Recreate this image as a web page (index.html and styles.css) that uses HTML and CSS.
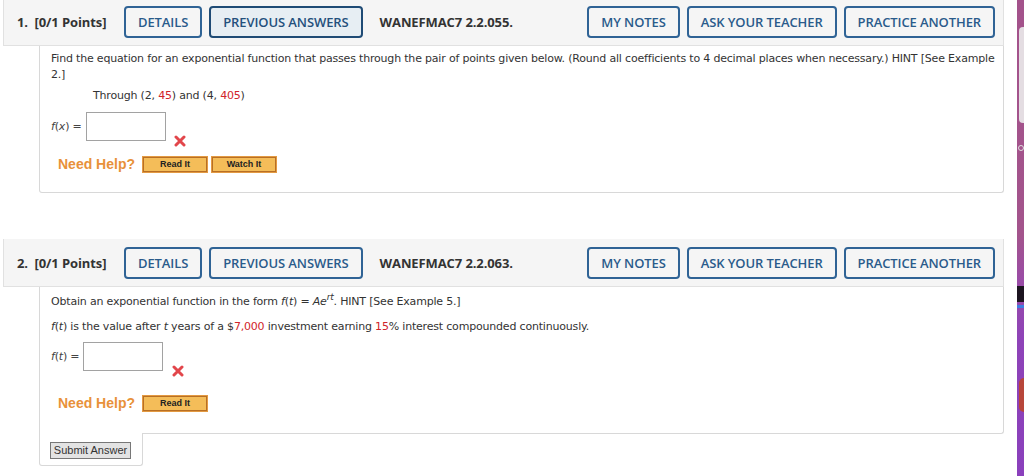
FILE: index.html
```html
<!DOCTYPE html>
<html lang="en">
<head>
    <meta charset="UTF-8">
    <title>WebAssign</title>
    <link rel="stylesheet" href="styles.css">
</head>
<body>
<div class="page">
    <div class="main">

        <!-- question 1 -->
        <div class="question first">
            <div class="q-head">
                <span class="q-num">1.&nbsp; [0/1 Points]</span>
                <button class="q-btn">DETAILS</button>
                <button class="q-btn active">PREVIOUS ANSWERS</button>
                <span class="q-code">WANEFMAC7 2.2.055.</span>
                <div class="q-tools">
                    <button class="q-btn">MY NOTES</button>
                    <button class="q-btn">ASK YOUR TEACHER</button>
                    <button class="q-btn">PRACTICE ANOTHER</button>
                </div>
            </div>
            <div class="q-body q1">
                <p class="q-text">Find the equation for an exponential function that passes through the pair of points given below. (Round all coefficients to 4 decimal places when necessary.) HINT [See Example 2.]</p>
                <p class="q-given">Through (2, <span class="red">45</span>) and (4, <span class="red">405</span>)</p>
                <div class="answer">
                    <span class="lbl"><i>f</i>(<i>x</i>) =</span>
                    <span class="ans-box"></span>
                    <svg class="wrong" width="12" height="12" viewBox="0 0 12 12"><path d="M2 2L10 10M10 2L2 10" stroke="#e2464b" stroke-width="3" stroke-linecap="round"/></svg>
                </div>
                <div class="help">
                    <span class="help-lbl">Need Help?</span>
                    <span class="help-btn">Read It</span>
                    <span class="help-btn">Watch It</span>
                </div>
            </div>
        </div>

        <!-- question 2 -->
        <div class="question">
            <div class="q-head">
                <span class="q-num">2.&nbsp; [0/1 Points]</span>
                <button class="q-btn">DETAILS</button>
                <button class="q-btn">PREVIOUS ANSWERS</button>
                <span class="q-code">WANEFMAC7 2.2.063.</span>
                <div class="q-tools">
                    <button class="q-btn">MY NOTES</button>
                    <button class="q-btn">ASK YOUR TEACHER</button>
                    <button class="q-btn">PRACTICE ANOTHER</button>
                </div>
            </div>
            <div class="q-body q2">
                <p class="q-text">Obtain an exponential function in the form <i>f</i>(<i>t</i>) = <i>Ae</i><sup><i>rt</i></sup>. HINT [See Example 5.]</p>
                <p class="q-line"><i>f</i>(<i>t</i>) is the value after <i>t</i> years of a $<span class="red">7,000</span> investment earning <span class="red">15</span>% interest compounded continuously.</p>
                <div class="answer">
                    <span class="lbl"><i>f</i>(<i>t</i>) =</span>
                    <span class="ans-box"></span>
                    <svg class="wrong" width="12" height="12" viewBox="0 0 12 12"><path d="M2 2L10 10M10 2L2 10" stroke="#e2464b" stroke-width="3" stroke-linecap="round"/></svg>
                </div>
                <div class="help">
                    <span class="help-lbl">Need Help?</span>
                    <span class="help-btn">Read It</span>
                </div>
            </div>
            <div class="submit-tab">
                <button class="submit">Submit Answer</button>
            </div>
        </div>

    </div>

    <!-- desktop showing at the window edge -->
    <div class="desk">
        <div class="desk-pill"></div>
        <div class="desk-dot"></div>
        <div class="desk-bar"></div>
        <div class="desk-line"></div>
        <div class="desk-icon"></div>
    </div>
</div>
</body>
</html>
```

FILE: styles.css
```css
html, body {
    margin: 0;
    padding: 0;
    background: #fff;
}
body {
    font-family: "DejaVu Sans", Verdana, sans-serif;
    color: #333;
    height: 476px;
    overflow: hidden;
}
.page {
    display: flex;
    height: 476px;
}
.main {
    width: 1004px;
    padding-left: 3px;
}

/* question block */
.question {
    margin-bottom: 46px;
}
.question.first {
    margin-top: -2px;
}
.q-head {
    display: flex;
    align-items: center;
    height: 47px;
    padding: 0 8px 0 13px;
    background: #f5f5f5;
    border: 1px solid #e1e1e1;
    border-top: none;
    font-family: "Open Sans", sans-serif;
}
.q-num {
    font-size: 13px;
    font-weight: 700;
    color: #333;
    width: 107px;
    letter-spacing: -0.1px;
}
.q-btn {
    height: 32px;
    padding: 0 12px;
    margin-right: 7px;
    border: 2px solid #2f6395;
    border-radius: 4px;
    background: transparent;
    color: #2a5b8b;
    font-family: "Open Sans", sans-serif;
    font-size: 13px;
    font-weight: 600;
    letter-spacing: -0.1px;
}
.q-btn.active {
    background: #e7eef3;
    border-color: #1f4b75;
    color: #24507c;
}
.q-code {
    margin-left: 10px;
    font-size: 13px;
    font-weight: 700;
    color: #333;
    letter-spacing: -0.1px;
}
.q-tools {
    margin-left: auto;
    display: flex;
}
.q-tools .q-btn {
    margin-right: 0;
    margin-left: 7px;
}

/* question body */
.q-body {
    margin-left: 36px;
    border: 1px solid #d8d8d8;
    border-top: none;
    border-radius: 0 0 3px 3px;
    padding: 5px 3px 0 11px;
    font-size: 11px;
    line-height: 16px;
    letter-spacing: -0.19px;
}
.q-body.q1 {
    height: 141px;
}
.q-body.q2 {
    height: 139px;
    padding-top: 7px;
    border-radius: 0 0 3px 0;
}
.q-body p {
    margin: 0;
}
.q-given {
    padding-left: 42px;
    margin-top: 5px !important;
}
.q-line {
    margin-top: 9px !important;
}
.q-body sup {
    font-size: 9px;
    line-height: 0;
}
.red {
    color: #d1242a;
}
.answer {
    display: flex;
    align-items: flex-start;
    margin-top: 8px;
}
.q2 .answer {
    margin-top: 7px;
}
.lbl {
    color: #444;
    line-height: 29px;
    margin-right: 4px;
}
.ans-box {
    width: 78px;
    height: 27px;
    border: 1px solid #a2a2a2;
    background: #fff;
}
.wrong {
    margin: 23px 0 0 8px;
}
.q2 .wrong {
    margin-left: 9px;
    margin-top: 23px;
}
.help {
    display: flex;
    align-items: center;
    margin-top: 9px;
    padding-left: 7px;
}
.q2 .help {
    margin-top: 18px;
}
.help-lbl {
    font-family: "Liberation Sans", Arial, sans-serif;
    font-size: 14px;
    font-weight: 700;
    letter-spacing: 0;
    color: #e8913a;
    margin-right: 8px;
}
.help-btn {
    width: 62px;
    height: 13px;
    line-height: 13px;
    margin-right: 5px;
    background: #f4bd59;
    border: 1px solid #b86f25;
    box-shadow: 0 0 0 1px #e39a42;
    text-align: center;
    font-family: "Liberation Sans", Arial, sans-serif;
    font-size: 9px;
    font-weight: 700;
    letter-spacing: 0;
    color: #222;
}

/* submit tab below question 2 */
.submit-tab {
    margin-left: 36px;
    margin-top: -1px;
    width: 92px;
    height: 26px;
    padding: 6px 0 0 10px;
    background: #fff;
    border: 1px solid #d8d8d8;
    border-top: none;
    border-radius: 0 0 3px 3px;
}
.submit {
    width: 81px;
    height: 17px;
    padding: 0;
    background: #e3e3e3;
    border: 1px solid #777;
    border-radius: 0;
    font-family: "Liberation Sans", Arial, sans-serif;
    font-size: 11px;
    color: #333;
}

/* desktop strip */
.desk {
    width: 7px;
    margin-left: 13px;
    height: 476px;
    background: linear-gradient(#a3528b 0, #a3548c 235px, #9a4ca6 280px, #8e43b8 340px, #8a40bc 476px);
    overflow: hidden;
}
.desk-pill {
    margin: 27px 0 0 2px;
    height: 96px;
    background: #e4dde2;
    border-radius: 4px 0 0 4px;
}
.desk-dot {
    margin: 22px 0 0 1px;
    width: 4px;
    height: 4px;
    border: 1px solid #ddd;
    border-radius: 50%;
}
.desk-bar {
    margin-top: 135px;
    height: 16px;
    background: #1c1420;
}
.desk-line {
    margin-top: 3px;
    height: 3px;
    background: #3d7ee0;
}
.desk-icon {
    margin: 70px 0 0 2px;
    height: 34px;
    background: #b8463a;
    border-radius: 6px 0 0 6px;
}
```
